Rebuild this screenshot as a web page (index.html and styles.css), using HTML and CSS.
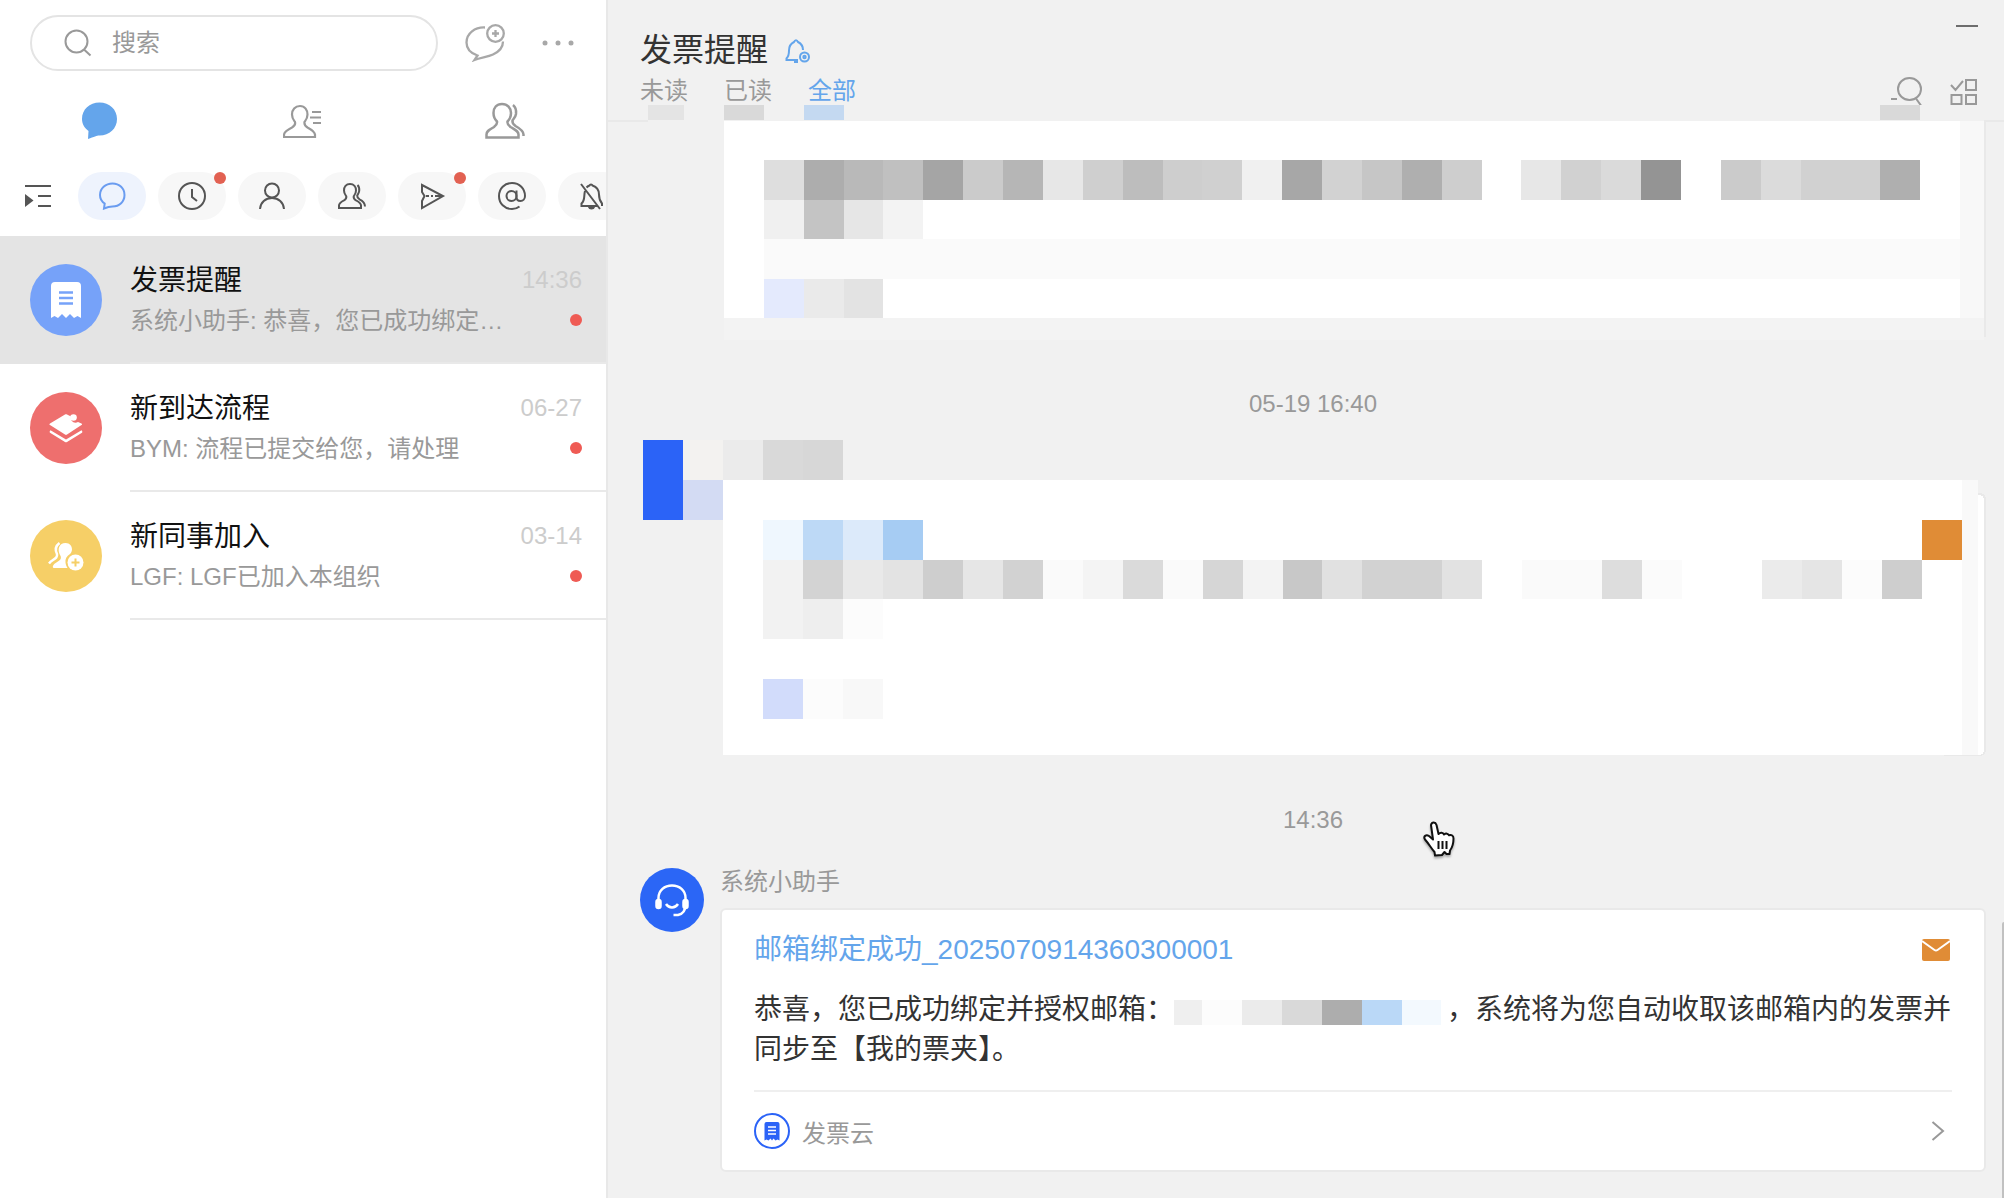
FILE: index.html
```html
<!DOCTYPE html>
<html lang="zh-CN">
	<head>
		<meta charset="UTF-8" />
		<meta name="viewport" content="width=device-width, initial-scale=1.0" />
		<title>发票提醒</title>
		<link rel="stylesheet" href="styles.css">
	</head>
	<body>
		<aside class="sidebar">
			<div class="search-row">
				<label class="search">
					<svg width="28" height="28" viewBox="0 0 28 28" fill="none" stroke="#999" stroke-width="2">
						<circle cx="12.5" cy="12.5" r="11" />
						<path d="M20 20.5l6.500 6" />
					</svg>
					<input type="text" placeholder="搜索" aria-label="搜索" />
				</label>
				<button class="icon-btn new-chat" aria-label="发起聊天">
					<svg width="40" height="38" viewBox="0 0 40 38" fill="none" stroke="#a8a8a8" stroke-width="2.300">
						<path d="M20 3.500C10 3 1.500 9.500 1.500 18.500c0 6 3.500 10.500 11 13L9.500 36c6.500-2.500 13-3 18.500-5.500 6.500-3 10-7.500 10-13" />
						<circle cx="30.500" cy="9.500" r="8.300" />
						<path d="M27 9.500h7M30.500 6v7" />
					</svg>
				</button>
				<button class="icon-btn more" aria-label="更多">
					<svg width="32" height="8" viewBox="0 0 32 8" fill="#a8a8a8">
						<circle cx="3" cy="4" r="2.500" />
						<circle cx="16" cy="4" r="2.500" />
						<circle cx="29" cy="4" r="2.500" />
					</svg>
				</button>
			</div>

			<nav class="tabs">
				<button class="icon-btn" aria-label="消息">
					<svg width="40" height="40" viewBox="0 0 40 40" fill="#64a5eb">
						<path d="M18.500 1.500c10 0 17.500 7 17.500 16.500S28.500 34.500 18.500 34.500c-2-.2-5 1-11.500 3.500l.5-8C3.500 27 1 23 1 18 1 8.500 8.500 1.500 18.500 1.500z" />
					</svg>
				</button>
				<button class="icon-btn" aria-label="联系人">
					<svg width="40" height="40" viewBox="0 0 40 40" fill="none" stroke="#999" stroke-width="2.200">
						<path d="M17 5c-5 0-8 4-8 8.500 0 4 1.500 5.500 3 7.500.8 3-.5 4-3 5.500-5 2.500-7.500 4-8 7V36h31v-2.500c-.5-3-3-4.500-7.500-7-2.500-1.500-3.500-2.500-3-5.500 1.500-2 3-3.500 3-7.500C24.500 9 22 5 17 5z" />
						<path d="M29 11h9M27 16.500h11M30 22h8" />
					</svg>
				</button>
				<button class="icon-btn" aria-label="群组">
					<svg width="40" height="40" viewBox="0 0 40 40" fill="none" stroke="#999" stroke-width="2.500">
						<path d="M17 3c-5.500 0-8.500 4-8.500 9 0 4 1.500 6.500 3.500 8.500.5 3-1 4-3 5.500-5 3-7.500 4-7.500 7.500V36.500h32v-3c0-3.500-3-4.500-8-7.500-2-1.500-3.500-2.500-3-5.500 2-2 3.500-4.500 3.500-8.500 0-5-3.500-9-9-9z" />
						<path d="M28 4c2.500 2 3.500 5 3 9-.5 3-2 4-3.500 6.500-.5 3 1 4 3 5.500 4.500 2.500 8 5 8 8.500V35" />
					</svg>
				</button>
			</nav>

			<div class="filters">
				<button class="icon-btn filter-toggle" aria-label="展开">
					<svg width="26" height="24" viewBox="0 0 26 24">
						<path d="M0 2h26M13 12h13M13 22h13" stroke="#555" stroke-width="2" />
						<path d="M0 10l8.500 6.500L0 23z" fill="#555" />
					</svg>
				</button>
				<button class="pill active" aria-label="全部消息">
					<svg width="28" height="28" viewBox="0 0 28 28" fill="none" stroke="#6a9cf0" stroke-width="2">
						<path d="M14.500 1.500c7 0 12 5 12 11.500s-5 11.500-12 11.500c-3 0-5 .5-8.500 2l.7-5C3.500 19.500 2 16.500 2 13 2 6.500 7.500 1.500 14.500 1.500z" />
					</svg>
				</button>
				<button class="pill" aria-label="未读">
					<svg width="28" height="28" viewBox="0 0 28 28" fill="none" stroke="#555" stroke-width="2">
						<circle cx="14" cy="14" r="13" />
						<path d="M14 7v8l5 4" />
					</svg>
					<i class="dot"></i>
				</button>
				<button class="pill" aria-label="单聊">
					<svg width="28" height="28" viewBox="0 0 28 28" fill="none" stroke="#555" stroke-width="2">
						<circle cx="14" cy="8.500" r="7" />
						<path d="M2 27c.5-6.500 5.500-11 12-11s11.500 4.500 12 11" />
					</svg>
				</button>
				<button class="pill" aria-label="群聊">
					<svg width="28" height="28" viewBox="0 0 28 28" fill="none" stroke="#555" stroke-width="2">
						<path d="M12 2C8 2 6 5 6 8.500c0 3 1 4 2.300 5.800.3 2-.5 3-2.300 4C2.500 20 1 21 1 23.500V26h22v-2.500c0-2.500-1.500-3.500-5-5.200-1.800-1-2.600-2-2.300-4C17 12.500 18 11.500 18 8.500 18 5 16 2 12 2z" />
						<path d="M19.500 3c1.500 1.500 2 3.500 1.700 6-.2 2-1.200 3-2 4.500-.2 2 .5 2.500 2.300 3.800 3.500 1.700 5.500 3.200 5.500 7.200" />
					</svg>
				</button>
				<button class="pill" aria-label="我发送的">
					<svg width="28" height="28" viewBox="0 0 28 28" fill="none" stroke="#555" stroke-width="2">
						<path d="M4 3l21 11L4 26v-7l2.500-5L4 10z" />
						<path d="M8 14h3M13 14h2M17 14h7" />
					</svg>
					<i class="dot"></i>
				</button>
				<button class="pill" aria-label="提到我的">
					<svg width="28" height="28" viewBox="0 0 28 28" fill="none" stroke="#555" stroke-width="2">
						<circle cx="13.500" cy="14" r="5" />
						<path d="M18.500 8.500V15c0 2.500 1.500 4 4 4s4.500-2 4.500-5C27 6.500 21.500 1 14 1S1 6.500 1 14s5.500 13 13 13c3 0 5-.5 7.500-2.500" />
					</svg>
				</button>
				<button class="pill" aria-label="免打扰">
					<svg width="28" height="28" viewBox="0 0 28 28" fill="none" stroke="#555" stroke-width="2">
						<path d="M7 9c-1.500 5 .5 9-3.500 12.500V24H19M8.500 5.500c1-1 1.500-1.500 3-2C12 2 14 2 14.500 3.500c4.500 1.500 6.500 4.500 6.500 9 0 4 .5 6 3 9V24M3 2l19 25" />
						<path d="M11 25h5c-.5 2-4.500 2-5 0z" fill="#555" />
					</svg>
				</button>
			</div>

			<ul class="chats">
				<li>
					<a class="chat selected" href="#">
						<span class="avatar blue">
							<svg width="40" height="40" viewBox="0 0 40 40">
								<path d="M5 6a4 4 0 0 1 4-4h22a4 4 0 0 1 4 4v32l-3.500-2L28 38l-4-4-4 4-4-4-4 4-3.500-2L5 38z" fill="#fff" />
								<path d="M13 12.500h14M13 18h14M13 23.500h14" stroke="#76a2f9" stroke-width="2.500" />
							</svg>
						</span>
						<span class="chat-body">
							<span class="chat-line"><b class="chat-name">发票提醒</b><time>14:36</time></span>
							<span class="chat-line"><span class="chat-text">系统小助手: 恭喜，您已成功绑定…</span><i class="dot"></i></span>
						</span>
					</a>
				</li>
				<li>
					<a class="chat" href="#">
						<span class="avatar red">
							<svg width="40" height="40" viewBox="0 0 40 40" fill="#fff">
								<path d="M19 6.500L4 15.500c-.8.500-.8 1 0 1.500l15 9.500c.7.500 1.300.5 2 0L35.500 17c.8-.5.800-1 0-1.500l-3.500-1.500c-4 2-8-1-7-5.500L21 6.500c-.7-.4-1.300-.4-2 0z" />
								<circle cx="27.500" cy="9.500" r="3.300" />
								<path d="M4.500 22.200L20 31.500l15.500-9.300c1 .8 1 1.800.5 2.600L21 34c-.7.400-1.300.4-2 0L4 24.800c-.5-.8-.5-1.800.5-2.600z" />
							</svg>
						</span>
						<span class="chat-body">
							<span class="chat-line"><b class="chat-name">新到达流程</b><time>06-27</time></span>
							<span class="chat-line"><span class="chat-text">BYM: 流程已提交给您，请处理</span><i class="dot"></i></span>
						</span>
					</a>
				</li>
				<li>
					<a class="chat" href="#">
						<span class="avatar yellow">
							<svg width="40" height="40" viewBox="0 0 40 40" fill="#fff">
								<path d="M13.500 7c-4 3-4.500 7-2.500 11 .5 3-1 4-4 6-2 1.300-3 2.200-4 3.500" fill="none" stroke="#fff" stroke-width="2.500" />
								<path d="M19.500 7c4.500 0 6.500 3 6.500 6.500-.2 2-1 3.500-2 4.500-3.500 2-5 5-4.500 8.500.2 2.200 1 3.800 2 5.500H8c-1.500 0-1.500-1.800-.5-3 1.800-2.500 6.500-4 7.300-6.500.4-1.800-.3-2.800-1.300-4.500-2-5-.5-11 6-11z" />
								<circle cx="29.500" cy="26.500" r="8" />
								<path d="M29.500 22.500v8M25.500 26.500h8" stroke="#f6cf67" stroke-width="2" />
							</svg>
						</span>
						<span class="chat-body">
							<span class="chat-line"><b class="chat-name">新同事加入</b><time>03-14</time></span>
							<span class="chat-line"><span class="chat-text">LGF: LGF已加入本组织</span><i class="dot"></i></span>
						</span>
					</a>
				</li>
			</ul>
		</aside>

		<main class="main">
			<header class="header">
				<div class="header-left">
					<div class="title-row">
						<h1>发票提醒</h1>
						<button class="icon-btn" aria-label="提醒设置">
							<svg width="26" height="26" viewBox="0 0 26 26" fill="none" stroke="#64a5eb" stroke-width="2">
								<path d="M14 23H2.500v-1.500c2-2 2.500-4 2.500-8C5 9 7 6.500 10 5c1-2.500 3-2.500 4 0 3 1.500 5 4 5 8M10 25h4" />
								<circle cx="20.500" cy="20" r="4.500" />
								<circle cx="20.500" cy="20" r="1.200" />
							</svg>
						</button>
					</div>
					<nav class="header-tabs">
						<button>未读</button>
						<button>已读</button>
						<button class="active">全部</button>
					</nav>
				</div>
				<div class="header-right">
					<button class="icon-btn" aria-label="最小化">
						<svg width="22" height="2" viewBox="0 0 22 2"><path d="M0 1h22" stroke="#6d6d6d" stroke-width="2" /></svg>
					</button>
					<div class="header-tools">
						<button class="icon-btn" aria-label="查找消息">
							<svg width="34" height="28" viewBox="0 0 34 28" fill="none" stroke="#999" stroke-width="2">
								<ellipse cx="19.500" cy="12" rx="11.500" ry="11" />
								<path d="M26 21.500l5 7M1 22h6" />
							</svg>
						</button>
						<button class="icon-btn" aria-label="批量处理">
							<svg width="28" height="28" viewBox="0 0 28 28" fill="none" stroke="#999" stroke-width="2">
								<path d="M1 8l4.500 5L13 4M16 3h10v10H16zM1.500 18h10v9h-10zM16 18h10v9H16z" />
							</svg>
						</button>
					</div>
				</div>
			</header>

			<!-- masked rows -->
			<svg class="mask-head" viewBox="0 0 1396 15" preserveAspectRatio="none" shape-rendering="crispEdges">
				<rect x="40" width="36" height="15" fill="#e4e4e4" />
				<rect x="116" width="40" height="15" fill="#d9d9d9" />
				<rect x="196" width="40" height="15" fill="#c4d9f1" />
				<rect x="1272" width="40" height="15" fill="#d9d9d9" />
			</svg>
			<svg class="mask-first" viewBox="0 0 1396 220" preserveAspectRatio="none" shape-rendering="crispEdges">
				<path d="M0 0h40v2H0zM1376 0h20v2h-20zM1376 0h2v217h-2z" fill="#e9e9e9" />
				<rect x="116" y="1" width="1260" height="219" fill="#f3f3f3" />
				<rect x="1352" y="1" width="24" height="197" fill="#f8f8f8" />
				<svg x="116" y="1" width="1236" height="197" viewBox="0 0 31 5" preserveAspectRatio="none">
					<rect width="31" height="5" fill="#fff" />
					<rect x="1" y="1" width="1" height="1" fill="#dedede" />
					<rect x="2" y="1" width="1" height="1" fill="#adadad" />
					<rect x="3" y="1" width="1" height="1" fill="#b9b9b9" />
					<rect x="4" y="1" width="1" height="1" fill="#c0c0c0" />
					<rect x="5" y="1" width="1" height="1" fill="#a5a5a5" />
					<rect x="6" y="1" width="1" height="1" fill="#cbcbcb" />
					<rect x="7" y="1" width="1" height="1" fill="#b6b6b6" />
					<rect x="8" y="1" width="1" height="1" fill="#e7e7e7" />
					<rect x="9" y="1" width="1" height="1" fill="#cfcfcf" />
					<rect x="10" y="1" width="1" height="1" fill="#bdbdbd" />
					<rect x="11" y="1" width="1" height="1" fill="#cecece" />
					<rect x="12" y="1" width="1" height="1" fill="#d0d0d0" />
					<rect x="13" y="1" width="1" height="1" fill="#f0f0f0" />
					<rect x="14" y="1" width="1" height="1" fill="#a7a7a7" />
					<rect x="15" y="1" width="1" height="1" fill="#d2d2d2" />
					<rect x="16" y="1" width="1" height="1" fill="#c6c6c6" />
					<rect x="17" y="1" width="1" height="1" fill="#afafaf" />
					<rect x="18" y="1" width="1" height="1" fill="#cecece" />
					<rect x="20" y="1" width="1" height="1" fill="#e7e7e7" />
					<rect x="21" y="1" width="1" height="1" fill="#d1d1d1" />
					<rect x="22" y="1" width="1" height="1" fill="#dadada" />
					<rect x="23" y="1" width="1" height="1" fill="#949494" />
					<rect x="25" y="1" width="1" height="1" fill="#cbcbcb" />
					<rect x="26" y="1" width="1" height="1" fill="#dbdbdb" />
					<rect x="27" y="1" width="2" height="1" fill="#d1d1d1" />
					<rect x="29" y="1" width="1" height="1" fill="#afafaf" />
					<rect x="1" y="2" width="1" height="1" fill="#f0f0f0" />
					<rect x="2" y="2" width="1" height="1" fill="#c4c4c4" />
					<rect x="3" y="2" width="1" height="1" fill="#e6e6e6" />
					<rect x="4" y="2" width="1" height="1" fill="#f3f3f3" />
					<rect x="1" y="3" width="30" height="1" fill="#fafafa" />
					<rect x="1" y="4" width="1" height="1" fill="#e4eafd" />
					<rect x="2" y="4" width="1" height="1" fill="#eaeaea" />
					<rect x="3" y="4" width="1" height="1" fill="#e3e3e3" />
				</svg>
			</svg>

			<div class="messages">
				<time class="stamp">05-19 16:40</time>

				<svg class="mask-second" viewBox="0 0 1346 316" preserveAspectRatio="none" shape-rendering="crispEdges">
					<rect x="1300" y="53" width="46" height="263" rx="6" fill="#e9e9e9" />
					<rect x="1300" y="55" width="44" height="260" rx="5" fill="#fff" />
					<rect x="1320" y="40" width="18" height="275" fill="#f9f9f9" />
					<rect x="83" y="40" width="1239" height="275" fill="#fff" />
					<svg x="3" y="0" width="1319" height="279" viewBox="0 0 33 7" preserveAspectRatio="none">
						<rect width="1" height="2" fill="#2b63f7" />
						<rect x="1" y="0" width="1" height="1" fill="#f3f2f0" />
						<rect x="2" y="0" width="1" height="1" fill="#ebebeb" />
						<rect x="3" y="0" width="1" height="1" fill="#d9d9d9" />
						<rect x="4" y="0" width="1" height="1" fill="#d7d7d7" />
						<rect x="1" y="1" width="1" height="1" fill="#d3dbf3" />
						<rect x="3" y="2" width="1" height="1" fill="#eff7fe" />
						<rect x="4" y="2" width="1" height="1" fill="#bdd9f6" />
						<rect x="5" y="2" width="1" height="1" fill="#dceafa" />
						<rect x="6" y="2" width="1" height="1" fill="#a6ccf3" />
						<rect x="32" y="2" width="1" height="1" fill="#e08c36" />
						<rect x="3" y="3" width="1" height="2" fill="#f2f2f2" />
						<rect x="4" y="3" width="1" height="1" fill="#d3d3d3" />
						<rect x="5" y="3" width="1" height="1" fill="#e9e9e9" />
						<rect x="6" y="3" width="1" height="1" fill="#e3e3e3" />
						<rect x="7" y="3" width="1" height="1" fill="#cecece" />
						<rect x="8" y="3" width="1" height="1" fill="#e6e6e6" />
						<rect x="9" y="3" width="1" height="1" fill="#d2d2d2" />
						<rect x="10" y="3" width="1" height="1" fill="#fafafa" />
						<rect x="11" y="3" width="1" height="1" fill="#f4f4f4" />
						<rect x="12" y="3" width="1" height="1" fill="#dadada" />
						<rect x="13" y="3" width="1" height="1" fill="#fafafa" />
						<rect x="14" y="3" width="1" height="1" fill="#d6d6d6" />
						<rect x="15" y="3" width="1" height="1" fill="#f3f3f3" />
						<rect x="16" y="3" width="1" height="1" fill="#c8c8c8" />
						<rect x="17" y="3" width="1" height="1" fill="#e1e1e1" />
						<rect x="18" y="3" width="2" height="1" fill="#d2d2d2" />
						<rect x="20" y="3" width="1" height="1" fill="#e2e2e2" />
						<rect x="22" y="3" width="2" height="1" fill="#fafafa" />
						<rect x="24" y="3" width="1" height="1" fill="#dddddd" />
						<rect x="25" y="3" width="1" height="1" fill="#fbfbfb" />
						<rect x="28" y="3" width="1" height="1" fill="#ebebeb" />
						<rect x="29" y="3" width="1" height="1" fill="#e5e5e5" />
						<rect x="30" y="3" width="1" height="1" fill="#fcfcfc" />
						<rect x="31" y="3" width="1" height="1" fill="#cecece" />
						<rect x="4" y="4" width="1" height="1" fill="#eeeeee" />
						<rect x="5" y="4" width="1" height="1" fill="#fcfcfc" />
						<rect x="3" y="6" width="1" height="1" fill="#d2dcfb" />
						<rect x="4" y="6" width="1" height="1" fill="#fcfcfc" />
						<rect x="5" y="6" width="1" height="1" fill="#f8f8f8" />
					</svg>
				</svg>

				<time class="stamp">14:36</time>

				<article class="message">
					<span class="sender">
						<svg width="36" height="36" viewBox="0 0 36 36" fill="none" stroke="#fff" stroke-width="2.500">
							<path d="M4.500 18v-2C4.500 8.500 10.500 3.500 18 3.500S31.500 8.500 31.500 16v2M31.500 23c0 6-3 9-7.500 10h-4.500" />
							<rect x="2.500" y="18" width="4" height="8" rx="2" fill="#fff" />
							<rect x="29.500" y="18" width="4" height="8" rx="2" fill="#fff" />
							<path d="M12 22c3 4.500 9 4.500 12 0" />
						</svg>
					</span>
					<div class="message-body">
						<div class="sender-name">系统小助手</div>
						<div class="card">
							<div class="card-head">
								<a href="#">邮箱绑定成功_2025070914360300001</a>
								<svg width="28" height="22" viewBox="0 0 28 22">
									<rect width="28" height="22" rx="2" fill="#e08c36" />
									<path d="M0 2l12.500 9c1 .7 2 .7 3 0L28 2" fill="none" stroke="#fff" stroke-width="2" />
								</svg>
							</div>
							<p class="card-text">恭喜，您已成功绑定并授权邮箱：<svg class="mask-mail" width="267" height="25" viewBox="0 0 267 25" shape-rendering="crispEdges">
								<rect width="28" height="25" fill="#efefef" />
								<rect x="28" width="40" height="25" fill="#fcfcfc" />
								<rect x="68" width="40" height="25" fill="#ebebeb" />
								<rect x="108" width="40" height="25" fill="#d9d9d9" />
								<rect x="148" width="40" height="25" fill="#adadad" />
								<rect x="188" width="40" height="25" fill="#bad8f7" />
								<rect x="228" width="39" height="25" fill="#f3f9fe" />
							</svg>，系统将为您自动收取该邮箱内的发票并同步至【我的票夹】。</p>
							<a class="card-foot" href="#">
								<svg width="36" height="36" viewBox="0 0 36 36">
									<circle cx="18" cy="18" r="17" fill="#fff" stroke="#2b63f7" stroke-width="2" />
									<path d="M10.500 11a2 2 0 0 1 2-2h11a2 2 0 0 1 2 2v16.500l-2-1-2 1-2-2-1.500 2-1.500-2-2 2-2-1-2 1z" fill="#2b63f7" />
									<path d="M14 14h8M14 17.500h8M14 21h8" stroke="#fff" stroke-width="1.500" />
								</svg>
								<span>发票云</span>
								<svg class="arrow" width="14" height="20" viewBox="0 0 14 20" fill="none" stroke="#999" stroke-width="2">
									<path d="M1.500 1l10.500 9L1.500 19" />
								</svg>
							</a>
						</div>
					</div>
				</article>
			</div>
			<i class="scroll-thumb"></i>
		</main>

		<svg class="pointer" width="34" height="42" viewBox="0 0 34 42">
			<path d="M9 6c1-3.500 4.500-3 5.500 0l2 9c2-2 4.500-1.500 5.500.500 2-1.500 4-1 5 .8 2.500-1 4.500.500 4.500 3.200 0 4-.500 8-3.500 12l-.500 3.500h-3l-2-2-2.500 3-7 .5-.500-3.500C9 29 7 25 3 20.500 1 17.500 4 15 7 17l4 3.500z" fill="#fff" stroke="#111" stroke-width="2" stroke-linejoin="round" />
			<path d="M16.500 22v8M20.500 22v8M24.500 22v8" stroke="#111" stroke-width="2" />
		</svg>
	</body>
</html>
```

FILE: styles.css
```css
* {
	box-sizing: border-box;
}
body {
	margin: 0;
	display: flex;
	min-height: 100vh;
	background: #f1f1f1;
	color: #333;
	font-family: "Liberation Sans", "Noto Sans CJK SC", sans-serif;
	font-size: 24px;
}
svg {
	display: block;
	flex-shrink: 0;
}
a {
	color: inherit;
	text-decoration: none;
}
button {
	padding: 0;
	border: 0;
	background: none;
	font: inherit;
	color: inherit;
	cursor: pointer;
}
.icon-btn {
	display: flex;
	align-items: center;
	justify-content: center;
}

/* sidebar */
.sidebar {
	flex: 0 0 608px;
	min-width: 0;
	background: #fff;
	border-right: 2px solid #e8e8e8;
}
.search-row {
	display: flex;
	align-items: center;
	padding: 15px 32px 0 30px;
}
.search {
	display: flex;
	flex: 1;
	align-items: center;
	gap: 20px;
	height: 56px;
	padding-left: 32px;
	border: 2px solid #e4e4e4;
	border-radius: 28px;
}
.search input {
	width: 240px;
	padding: 0;
	border: 0;
	outline: 0;
	font: inherit;
}
.search input::placeholder {
	color: #999;
	opacity: 1;
}
.new-chat {
	margin: 0 37px 0 27px;
}
.tabs {
	display: grid;
	grid-template-columns: repeat(3, 1fr);
	height: 60px;
	margin-top: 20px;
}
.filters {
	display: flex;
	gap: 12px;
	margin: 21px 0 16px;
	padding-left: 25px;
	overflow: hidden;
}
.filter-toggle {
	margin-right: 15px;
}
.pill {
	position: relative;
	display: flex;
	flex: 0 0 68px;
	align-items: center;
	justify-content: center;
	height: 48px;
	border-radius: 24px;
	background: #f7f7f7;
}
.pill.active {
	background: #eef3fd;
}
.dot {
	width: 12px;
	height: 12px;
	border-radius: 50%;
	background: #ef5b54;
}
.pill .dot {
	position: absolute;
	top: 0;
	right: 0;
	background: #e26152;
}
.chats {
	margin: 0;
	padding: 0;
	list-style: none;
}
.chat {
	display: flex;
	gap: 28px;
	padding-left: 30px;
}
.chat.selected {
	background: #e4e4e4;
}
.avatar {
	display: flex;
	flex: 0 0 72px;
	align-items: center;
	justify-content: center;
	height: 72px;
	margin-top: 28px;
	border-radius: 50%;
}
.avatar.blue {
	background: #76a2f9;
}
.avatar.red {
	background: #ee6f6e;
}
.avatar.yellow {
	background: #f6cf67;
}
.chat-body {
	flex: 1;
	height: 128px;
	padding: 25px 24px 0 0;
	border-bottom: 2px solid #e9e9e9;
}
.chat-line {
	display: flex;
	align-items: center;
	justify-content: space-between;
	height: 36px;
	margin-bottom: 5px;
	white-space: nowrap;
}
.chat-name {
	padding-bottom: 2px;
	color: #111;
	font-size: 28px;
	font-weight: normal;
}
.chat-line time {
	padding-top: 2px;
	color: #ccc;
}
.chat-text {
	padding-bottom: 3px;
	color: #999;
}

/* conversation */
.main {
	position: relative;
	flex: 1;
	min-width: 0;
}
.header {
	display: flex;
	justify-content: space-between;
	height: 105px;
	padding: 0 26px 0 32px;
}
.title-row {
	display: flex;
	align-items: center;
	gap: 16px;
	padding-top: 28px;
}
h1 {
	margin: 0;
	font-size: 32px;
	font-weight: normal;
	line-height: 44px;
}
.header-tabs {
	display: flex;
	gap: 36px;
	padding-top: 2px;
	color: #999;
	line-height: 34px;
}
.header-tabs .active {
	color: #64a5eb;
}
.header-right {
	display: flex;
	flex-direction: column;
	align-items: flex-end;
	justify-content: space-between;
	padding-top: 25px;
}
.header-tools {
	display: flex;
	gap: 26px;
}
.mask-head {
	width: 100%;
	height: 15px;
}
.mask-first {
	width: 100%;
	height: 220px;
}
.messages {
	padding: 49px 18px 26px 32px;
}
.stamp {
	display: block;
	color: #999;
	line-height: 30px;
	text-align: center;
}
.mask-second {
	width: 100%;
	height: 316px;
	margin: 21px 0 49px;
}
.message {
	display: flex;
	gap: 16px;
	margin-top: 33px;
}
.sender {
	display: flex;
	flex: 0 0 64px;
	align-items: center;
	justify-content: center;
	height: 64px;
	border-radius: 50%;
	background: #2b66f6;
}
.message-body {
	flex: 1;
	min-width: 0;
}
.sender-name {
	color: #999;
	line-height: 28px;
	margin-bottom: 12px;
}
.card {
	padding: 18px 32px 0;
	border: 2px solid #e9e9e9;
	border-radius: 6px;
	background: #fff;
}
.card-head {
	display: flex;
	align-items: center;
	justify-content: space-between;
	padding-right: 2px;
	color: #64a5eb;
	font-size: 28px;
	line-height: 44px;
}
.card-text {
	margin: 18px 0 20px;
	font-size: 28px;
	line-height: 40px;
}
.mask-mail {
	display: inline-block;
	margin-right: 6px;
	vertical-align: -6px;
}
.card-foot {
	display: flex;
	align-items: center;
	gap: 12px;
	height: 80px;
	border-top: 2px solid #efefef;
	color: #999;
}
.arrow {
	margin: 0 7px 0 auto;
}
.scroll-thumb {
	position: absolute;
	top: 922px;
	right: 0;
	bottom: 0;
	width: 2px;
	border-radius: 2px 0 0 0;
	background: #c1c1c1;
}
.pointer {
	position: absolute;
	top: 819px;
	left: 1422px;
	filter: drop-shadow(0 2px 1px rgba(0, 0, 0, 0.3));
}
```
